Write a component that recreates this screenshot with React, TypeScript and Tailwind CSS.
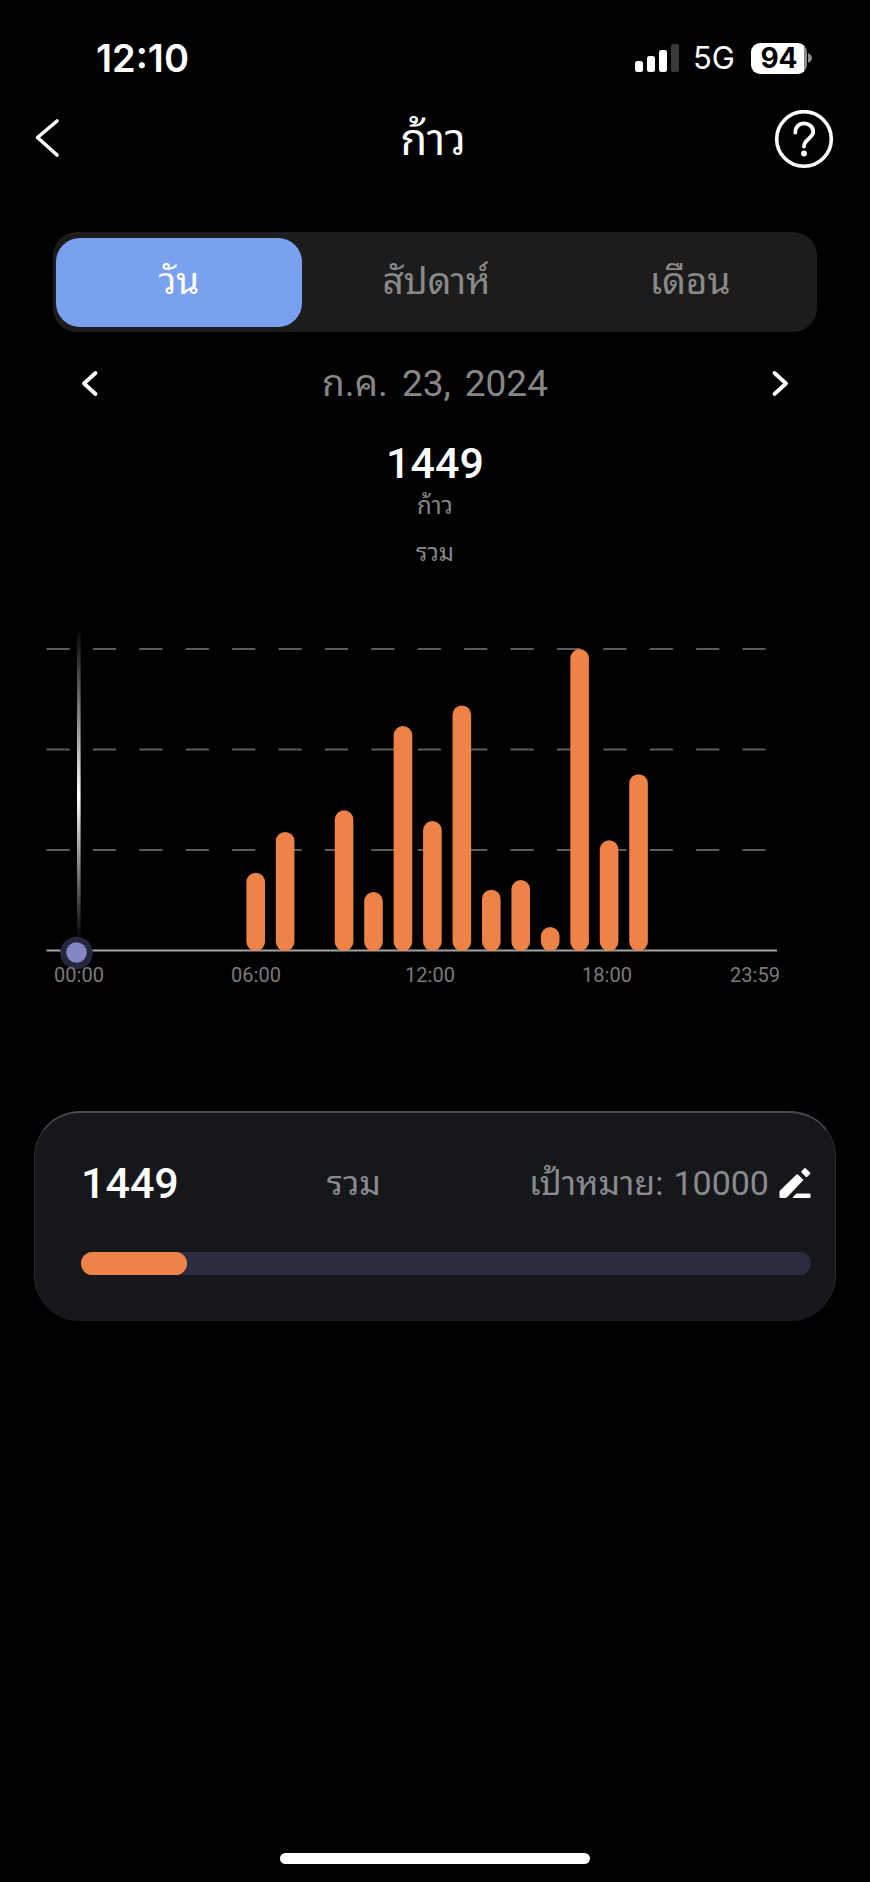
import { useState } from 'react'

const TABS = ['วัน', 'สัปดาห์', 'เดือน']

const STEPS = [
  { hour: 6, count: 65 },
  { hour: 7, count: 99 },
  { hour: 9, count: 117 },
  { hour: 10, count: 49 },
  { hour: 11, count: 187 },
  { hour: 12, count: 108 },
  { hour: 13, count: 204 },
  { hour: 14, count: 51 },
  { hour: 15, count: 59 },
  { hour: 16, count: 20 },
  { hour: 17, count: 251 },
  { hour: 18, count: 92 },
  { hour: 19, count: 147 },
]

const TICKS = [
  { x: 79, label: '00:00' },
  { x: 256, label: '06:00' },
  { x: 430, label: '12:00' },
  { x: 607, label: '18:00' },
  { x: 755, label: '23:59' },
]

const GOAL = 10000
const BASELINE = 341
const PLOT_HEIGHT = 302

function StatusBar() {
  return (
    <div className="mt-10 flex h-9 items-center justify-between pl-24 pr-[58px] font-['Inter',sans-serif]">
      <span className="text-[38px] leading-9 font-semibold">12:10</span>
      <div className="flex items-center">
        <svg width="44" height="28" viewBox="0 0 44 28" fill="#fff" aria-hidden="true">
          <rect x="0" y="17" width="8" height="11" rx="2.5" />
          <rect x="12" y="12" width="8" height="16" rx="2.5" />
          <rect x="24" y="6" width="8" height="22" rx="2.5" />
          <rect x="36" y="0" width="8" height="28" rx="2.5" fill="#3a3a3a" />
        </svg>
        <span className="ml-[14px] text-[31px] leading-8">5G</span>
        <div className="ml-4 flex h-[31px] w-14 items-center justify-center rounded-[9px] bg-linear-to-r from-white from-94% to-[#8a8a8a] to-94% text-[28px] leading-8 font-bold text-black">
          94
        </div>
        <svg className="ml-px" width="4" height="10" viewBox="0 0 4 10" aria-hidden="true">
          <path d="M0 0C2.5 1 4 3 4 5S2.500 9 0 10Z" fill="#8a8a8a" />
        </svg>
      </div>
    </div>
  )
}

function Header() {
  return (
    <header className="mt-[34px] flex h-[60px] items-center justify-between pr-9 pl-8">
      <button aria-label="ย้อนกลับ" className="flex w-[60px]">
        <svg width="30" height="44" viewBox="0 0 30 44" fill="none" stroke="#fff" strokeWidth="3.6" strokeLinecap="round" strokeLinejoin="round">
          <path d="M25 3L5.500 19.500L25 37" />
        </svg>
      </button>
      <h1 className="text-[44px] leading-[60px]">ก้าว</h1>
      <button aria-label="ช่วยเหลือ" className="flex w-[60px] justify-end">
        <svg width="60" height="60" viewBox="0 0 60 60" fill="none" stroke="#fff" strokeLinecap="round">
          <circle cx="30" cy="29" r="27.300" strokeWidth="3.600" />
          <path d="M21.300 22.500C21.300 17 25 13.300 30 13.300S39.200 17 39.200 21.600C39.200 28.500 30 29 30 36.500" strokeWidth="3.800" />
          <circle cx="30" cy="43.500" r="2.900" fill="#fff" stroke="none" />
        </svg>
      </button>
    </header>
  )
}

function Chart() {
  return (
    <svg className="mt-[38px] block w-full" viewBox="0 0 870 385" role="img" aria-label="ก้าว">
      <defs>
        <linearGradient id="cursor" x1="0" y1="0" x2="0" y2="1">
          <stop offset="0" stopColor="#fff" stopOpacity="0" />
          <stop offset="0.54" stopColor="#fff" />
          <stop offset="1" stopColor="#fff" stopOpacity="0" />
        </linearGradient>
      </defs>
      {[39, 139.5, 240].map((y) => (
        <line key={y} x1="46.500" x2="766" y1={y} y2={y} stroke="#5c5c5c" strokeWidth="1.800" strokeDasharray="23.200 23.200" />
      ))}
      <line x1="46.500" x2="777" y1="340.500" y2="340.500" stroke="#a3a3a3" strokeWidth="1.800" />
      {STEPS.map(({ hour, count }) => {
        const h = (count / 251) * PLOT_HEIGHT
        return (
          <rect key={hour} x={79 + hour * 29.45 - 9.3} y={BASELINE - h} width="18.600" height={h} rx="9.300" fill="#ee8347" />
        )
      })}
      <rect x="77" y="18" width="3.600" height="312" fill="url(#cursor)" />
      <circle cx="76.500" cy="343" r="16.300" fill="#25283c" />
      <circle cx="76.500" cy="342.500" r="10.300" fill="#8486c6" />
      {TICKS.map(({ x, label }) => (
        <text key={label} x={x} y="372" textAnchor="middle" fill="#7a7a7a" fontSize="20">
          {label}
        </text>
      ))}
    </svg>
  )
}

export default function App() {
  const [tab, setTab] = useState(0)
  const total = STEPS.reduce((sum, s) => sum + s.count, 0)

  return (
    <div className="flex min-h-screen flex-col bg-black font-['Roboto','Noto_Sans_Thai_Looped','Noto_Looped_Thai','Loma','Garuda','Waree','Noto_Sans_Thai',sans-serif] text-white">
      <StatusBar />
      <Header />

      {/* Range */}
      <nav className="mx-[53px] mt-[62px] grid h-[100px] grid-cols-3 rounded-3xl bg-[#1c1c1c] pt-[6px] pr-0 pb-[5px] pl-[3px]">
        {TABS.map((label, i) => (
          <button
            key={label}
            onClick={() => setTab(i)}
            className={`rounded-3xl pb-[2px] text-[37px] leading-[60px] ${
              tab === i ? 'mr-2 bg-[#7aa1f0] text-white' : 'text-[#8a8a8a]'
            }`}
          >
            {label}
          </button>
        ))}
      </nav>

      {/* Date */}
      <div className="mx-20 mt-6 flex h-14 items-center justify-between">
        <button aria-label="วันก่อนหน้า">
          <svg width="20" height="28" viewBox="0 0 20 28" fill="none" stroke="#fff" strokeWidth="3.800" strokeLinecap="round" strokeLinejoin="round">
            <path d="M15.500 3L4 13.500L15.500 24" />
          </svg>
        </button>
        <time dateTime="2024-07-23" className="flex gap-[14px] text-[37px] leading-[60px] text-[#868686]">
          <span>ก.ค.</span>
          <span>23,</span>
          <span>2024</span>
        </time>
        <button aria-label="วันถัดไป">
          <svg width="20" height="28" viewBox="0 0 20 28" fill="none" stroke="#fff" strokeWidth="3.800" strokeLinecap="round" strokeLinejoin="round">
            <path d="M4.500 3L16 13.500L4.500 24" />
          </svg>
        </button>
      </div>

      {/* Summary */}
      <div className="mt-[26px] flex flex-col items-center text-2xl text-[#868686]">
        <span className="text-[43px] leading-[50px] font-medium text-white">{total}</span>
        <span className="leading-9">ก้าว</span>
        <span className="mt-[10px] leading-[38px]">รวม</span>
      </div>

      <Chart />

      {/* Goal */}
      <section className="mx-[34px] mt-[116px] rounded-[46px] border-t-2 border-r border-l border-t-[#4a4a4a] border-r-[#2c2c2e] border-l-[#2c2c2e] bg-[#16171b] pt-10 pr-6 pb-[46px] pl-[46px]">
        <div className="flex h-[60px] items-center justify-between text-[#8a8a8e]">
          <span className="text-[43px] leading-[60px] font-medium text-white">{total}</span>
          <span className="text-[34px] leading-[60px]">รวม</span>
          <div className="flex items-center gap-[10px] text-[34px] leading-[60px]">
            <span className="flex gap-[10px]">
              <span>เป้าหมาย:</span>
              <span>{GOAL}</span>
            </span>
            <button aria-label="แก้ไขเป้าหมาย">
              <svg width="32" height="32" viewBox="0 0 32 32" fill="#fff">
                <path d="M19 7.600L24.500 13L8 30.300Q7.300 31 6.300 31H2Q0.500 31 0.500 29.700V25Q0.500 24.200 1.100 23.600L17.500 7.600Q18.300 6.900 19 7.600Z" />
                <path d="M25.200 1.400Q26 0.700 26.800 1.400L31 5.400Q31.700 6.200 31 7L28.300 9.700Q27.500 10.400 26.700 9.700L22.500 5.600Q21.900 4.800 22.600 4Z" />
                <path d="M17.500 26.500H30.500Q31.500 26.500 31.500 27.500V30Q31.500 31 30.500 31H14Q13.500 30.500 14 30Z" />
              </svg>
            </button>
          </div>
        </div>
        <div className="mt-[39px] h-[23px] rounded-full bg-[#2a2c40]">
          <div className="h-full rounded-full bg-[#ee8347]" style={{ width: `${(total / GOAL) * 100}%` }} />
        </div>
      </section>

      {/* Home indicator */}
      <div className="mx-auto mt-auto mb-[18px] h-[11px] w-[310px] rounded-full bg-white" />
    </div>
  )
}
